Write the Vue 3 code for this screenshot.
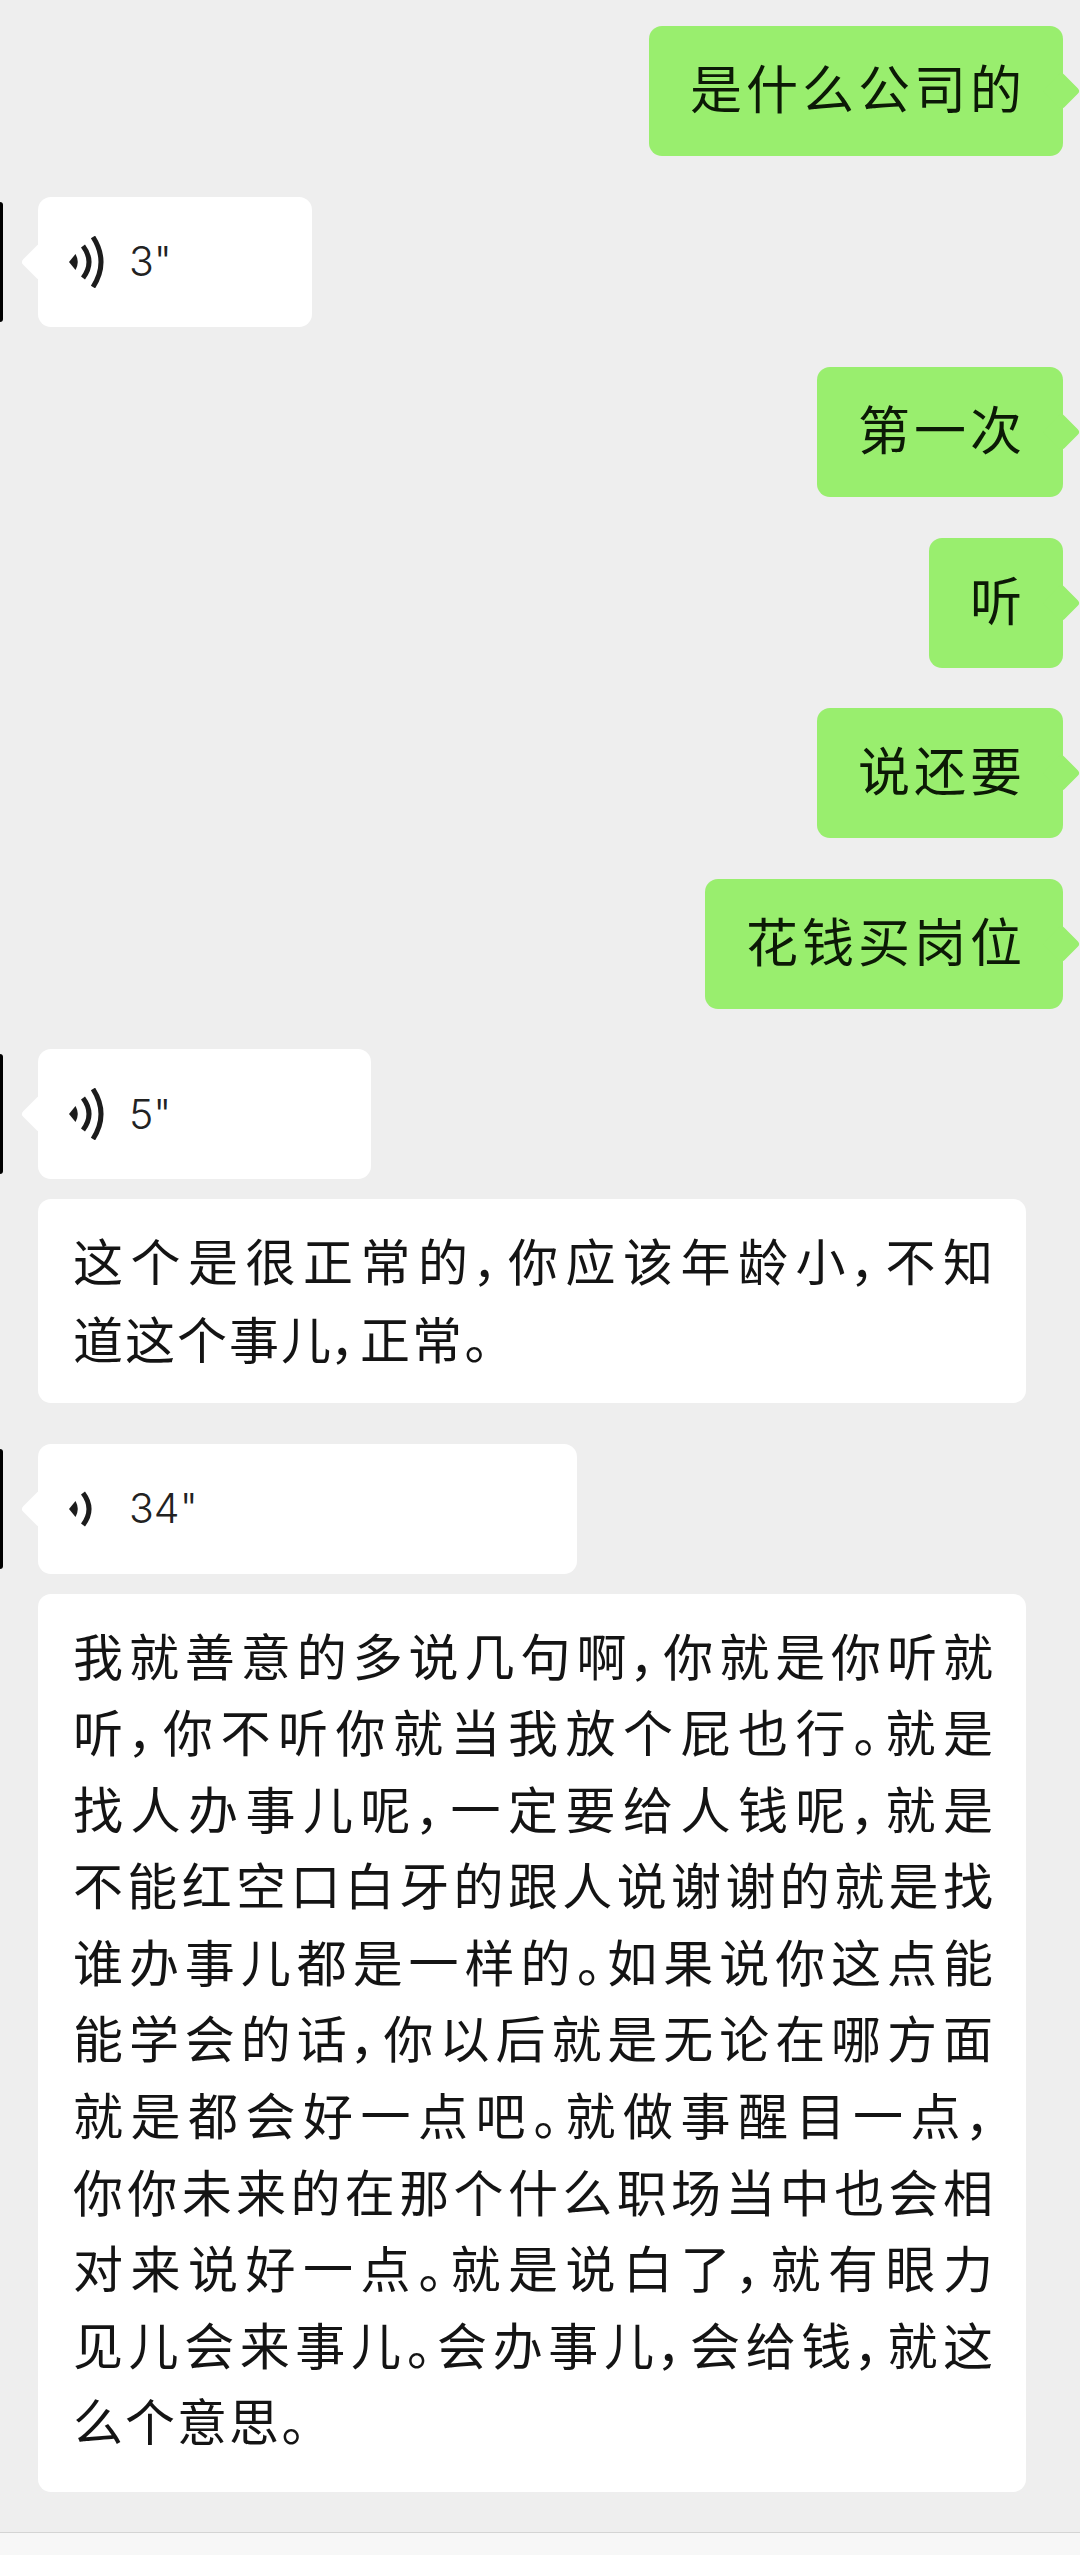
<script setup>
const messages = [
  { type: 'out', text: '是什么公司的' },
  { type: 'voice', seconds: 3, width: 274, arcs: 3 },
  { type: 'out', text: '第一次' },
  { type: 'out', text: '听' },
  { type: 'out', text: '说还要' },
  { type: 'out', text: '花钱买岗位' },
  { type: 'voice', seconds: 5, width: 333, arcs: 3 },
  {
    type: 'text',
    lines: ['这个是很正常的，你应该年龄小，不知', '道这个事儿，正常。'],
    spaced: true,
  },
  { type: 'voice', seconds: 34, width: 539, arcs: 2 },
  {
    type: 'text',
    lines: [
      '我就善意的多说几句啊，你就是你听就',
      '听，你不听你就当我放个屁也行。就是',
      '找人办事儿呢，一定要给人钱呢，就是',
      '不能红空口白牙的跟人说谢谢的就是找',
      '谁办事儿都是一样的。如果说你这点能',
      '能学会的话，你以后就是无论在哪方面',
      '就是都会好一点吧。就做事醒目一点，',
      '你你未来的在那个什么职场当中也会相',
      '对来说好一点。就是说白了，就有眼力',
      '见儿会来事儿。会办事儿，会给钱，就这',
      '么个意思。',
    ],
  },
]
</script>

<template>
  <div class="page">
    <div class="chat">
      <template v-for="(m, i) in messages" :key="i">
        <div v-if="m.type === 'out'" class="row row-out">
          <div class="bubble out">{{ m.text }}</div>
        </div>

        <div v-else-if="m.type === 'voice'" class="row row-in">
          <span class="avatar-edge"></span>
          <div class="bubble voice" :style="{ width: m.width + 'px' }">
            <svg class="wave" viewBox="0 0 36 52" width="36" height="52" aria-hidden="true">
              <path class="dot" d="M0 26 L6.5 18 Q11 26 6.5 34 Z" />
              <path class="arc" d="M14 10 Q26 26 14 42" />
              <path v-if="m.arcs > 2" class="arc" d="M24 1 Q40 26 24 51" />
            </svg>
            <span class="seconds">{{ m.seconds }}"</span>
          </div>
        </div>

        <div v-else class="row row-follow">
          <div class="transcript" :class="{ spaced: m.spaced }">
            <div
              v-for="(line, j) in m.lines"
              :key="j"
              class="line"
              :class="{ last: j === m.lines.length - 1 }"
            >{{ line }}</div>
          </div>
        </div>
      </template>
    </div>
    <div class="input-bar"></div>
  </div>
</template>

<style>
html,
body {
  margin: 0;
  background: #ededed;
}
</style>

<style scoped>
.page {
  width: 1080px;
  height: 2555px;
  display: flex;
  flex-direction: column;
  background: #eeeeee;
  color: #111111;
  font-family: "Noto Sans CJK SC", "Noto Sans", sans-serif;
  overflow: hidden;
}

.chat {
  flex: 1;
  padding-top: 26px;
  display: flex;
  flex-direction: column;
}

.row {
  position: relative;
  display: flex;
  margin-top: 40.5px;
}

.row:first-child {
  margin-top: 0;
}

.row-out {
  justify-content: flex-end;
  padding-right: 17px;
}

.row-in,
.row-follow {
  padding-left: 38px;
}

.row-follow {
  margin-top: 20px;
}

.bubble {
  position: relative;
  box-sizing: border-box;
  height: 130px;
  border-radius: 13px;
  display: flex;
  align-items: center;
}

.bubble::after {
  content: "";
  position: absolute;
  top: 50%;
  width: 27px;
  height: 27px;
  border-radius: 4px;
  background: inherit;
  transform: translateY(-50%) rotate(45deg);
}

.out {
  background: #99ee6e;
  padding: 0 37px 9px 41px;
  font-size: 52px;
  letter-spacing: 4px;
  color: #0c1a06;
}

.out::after {
  right: -12px;
}

.voice {
  background: #ffffff;
  padding-left: 31px;
  gap: 24px;
}

.voice::after {
  left: -12px;
}

.wave {
  flex: none;
}

.dot {
  fill: #1c1c1c;
}

.arc {
  fill: none;
  stroke: #1c1c1c;
  stroke-width: 5;
}

.seconds {
  font-family: Inter, Roboto, "Liberation Sans", sans-serif;
  font-size: 41px;
  font-weight: 300;
  line-height: 1;
  color: #222222;
}

.avatar-edge {
  position: absolute;
  left: 0;
  top: 5px;
  width: 3px;
  height: 120px;
  border-radius: 0 3px 3px 0;
  background: #000000;
}

.transcript {
  box-sizing: border-box;
  width: 988px;
  padding: 22px 31px 34px 35px;
  border-radius: 13px;
  background: #ffffff;
  font-size: 50px;
  line-height: 76.6px;
  letter-spacing: 2px;
  font-feature-settings: "palt";
  color: #141414;
}

.transcript.spaced {
  padding: 21px 31px 27px 35px;
  line-height: 78px;
}

.line {
  text-align: justify;
  text-align-last: justify;
}

.line.last {
  text-align-last: left;
}

.input-bar {
  flex: none;
  height: 22px;
  border-top: 1px solid #d4d4d4;
  background: #f7f7f7;
}
</style>
